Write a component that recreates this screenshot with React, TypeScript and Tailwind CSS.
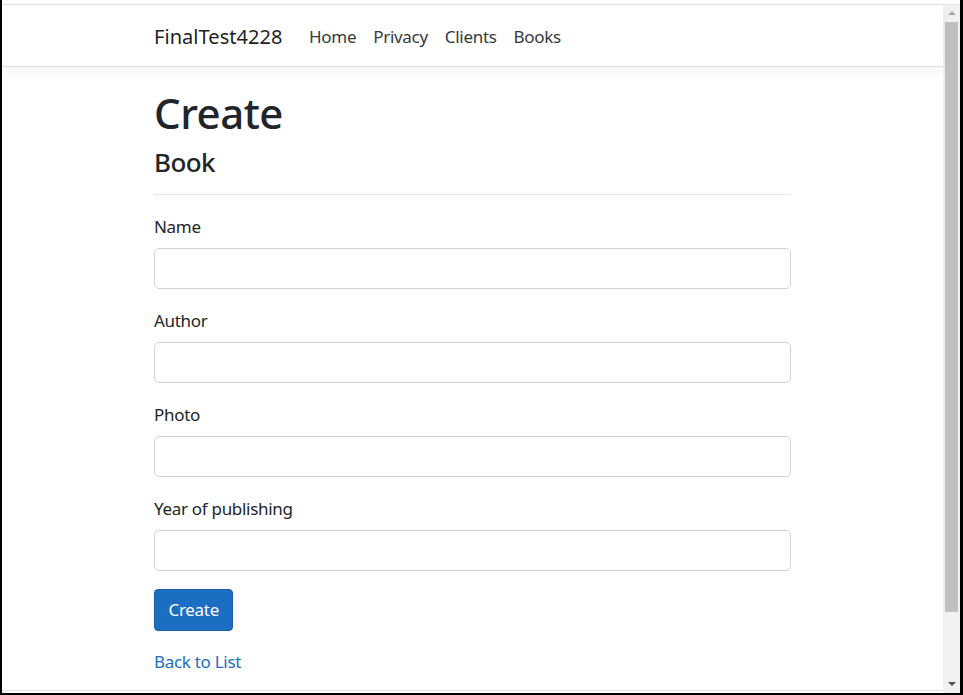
import { useState } from "react";

const fields = ["Name", "Author", "Photo", "Year of publishing"];

const navLinks = ["Home", "Privacy", "Clients", "Books"];

function Scrollbar() {
  return (
    <div className="w-[17px] flex flex-col bg-[#f1f1f1]">
      <div className="h-[17px] flex items-center justify-center">
        <svg width="8" height="5" viewBox="0 0 8 5">
          <path d="M4 0 L8 4 L0 4 Z" fill="#a3a3a3" />
        </svg>
      </div>
      <div className="flex-1">
        <div className="mx-[2px] h-[590px] bg-[#c1c1c1]" />
      </div>
      <div className="h-[17px] flex items-center justify-center">
        <svg width="8" height="5" viewBox="0 0 8 5">
          <path d="M0 0 L8 0 L4 4 Z" fill="#505050" />
        </svg>
      </div>
    </div>
  );
}

export default function App() {
  const [values, setValues] = useState<Record<string, string>>({});

  return (
    <div className="w-[963px] h-[695px] bg-black pl-[2px] pr-[3px] pb-[2px] flex flex-col font-['Noto_Sans','Open_Sans',sans-serif] text-[#212529]">
      <div className="bg-white h-[4px]" />
      <div className="h-px bg-[#dee2e6]" />
      <div className="flex-1 flex bg-white min-h-0">
        <div className="flex-1 flex flex-col min-w-0">
          <header className="relative z-10 h-[62px] bg-white border-b border-[#dee2e6] shadow-[0_4px_12px_rgba(0,0,0,0.05)]">
            <div className="h-full pl-[152px] pt-[3px] flex items-center">
              <a href="#" className="text-[20px] tracking-[0.05px] text-black/90 mr-[18px]">
                FinalTest4228
              </a>
              <nav className="flex items-center">
                {navLinks.map((l) => (
                  <a key={l} href="#" className="px-[8.5px] text-[17px] tracking-[-0.3px] text-[#343a40]">
                    {l}
                  </a>
                ))}
              </nav>
            </div>
          </header>

          <main className="flex-1 pl-[152px] pt-[19px]">
            <h1 className="text-[42px] leading-[53px] tracking-[-0.5px] font-medium">Create</h1>
            <h4 className="mt-[7px] text-[26px] leading-[32px] tracking-[-0.6px] font-medium">Book</h4>
            <div className="w-[637px] mt-[16px] h-px bg-[#e5e5e5]" />

            <form className="w-[637px] mt-[18px]" onSubmit={(e) => e.preventDefault()}>
              {fields.map((f) => (
                <div key={f} className="mb-[18px]">
                  <label className="block text-[17px] leading-[27px] tracking-[-0.3px] mb-[8px]">{f}</label>
                  <input
                    value={values[f] ?? ""}
                    onChange={(e) => setValues({ ...values, [f]: e.target.value })}
                    className="block w-full h-[41px] px-[12px] rounded-[5px] border border-[#ced4da] bg-white text-[17px] outline-none"
                  />
                </div>
              ))}
              <button
                type="submit"
                className="h-[42px] px-[13.5px] rounded-[4px] bg-[#1b6ec2] border border-[#1861ac] text-white text-[17px] tracking-[-0.3px]"
              >
                Create
              </button>
            </form>

            <div className="mt-[17px] text-[17px] leading-[27px] tracking-[-0.3px]">
              <a href="#" className="text-[#1b6ec2]">
                Back to List
              </a>
            </div>
          </main>

          <div className="h-px bg-[#e0e0e0]" />
          <div className="h-[2px]" />
        </div>
        <Scrollbar />
      </div>
    </div>
  );
}
